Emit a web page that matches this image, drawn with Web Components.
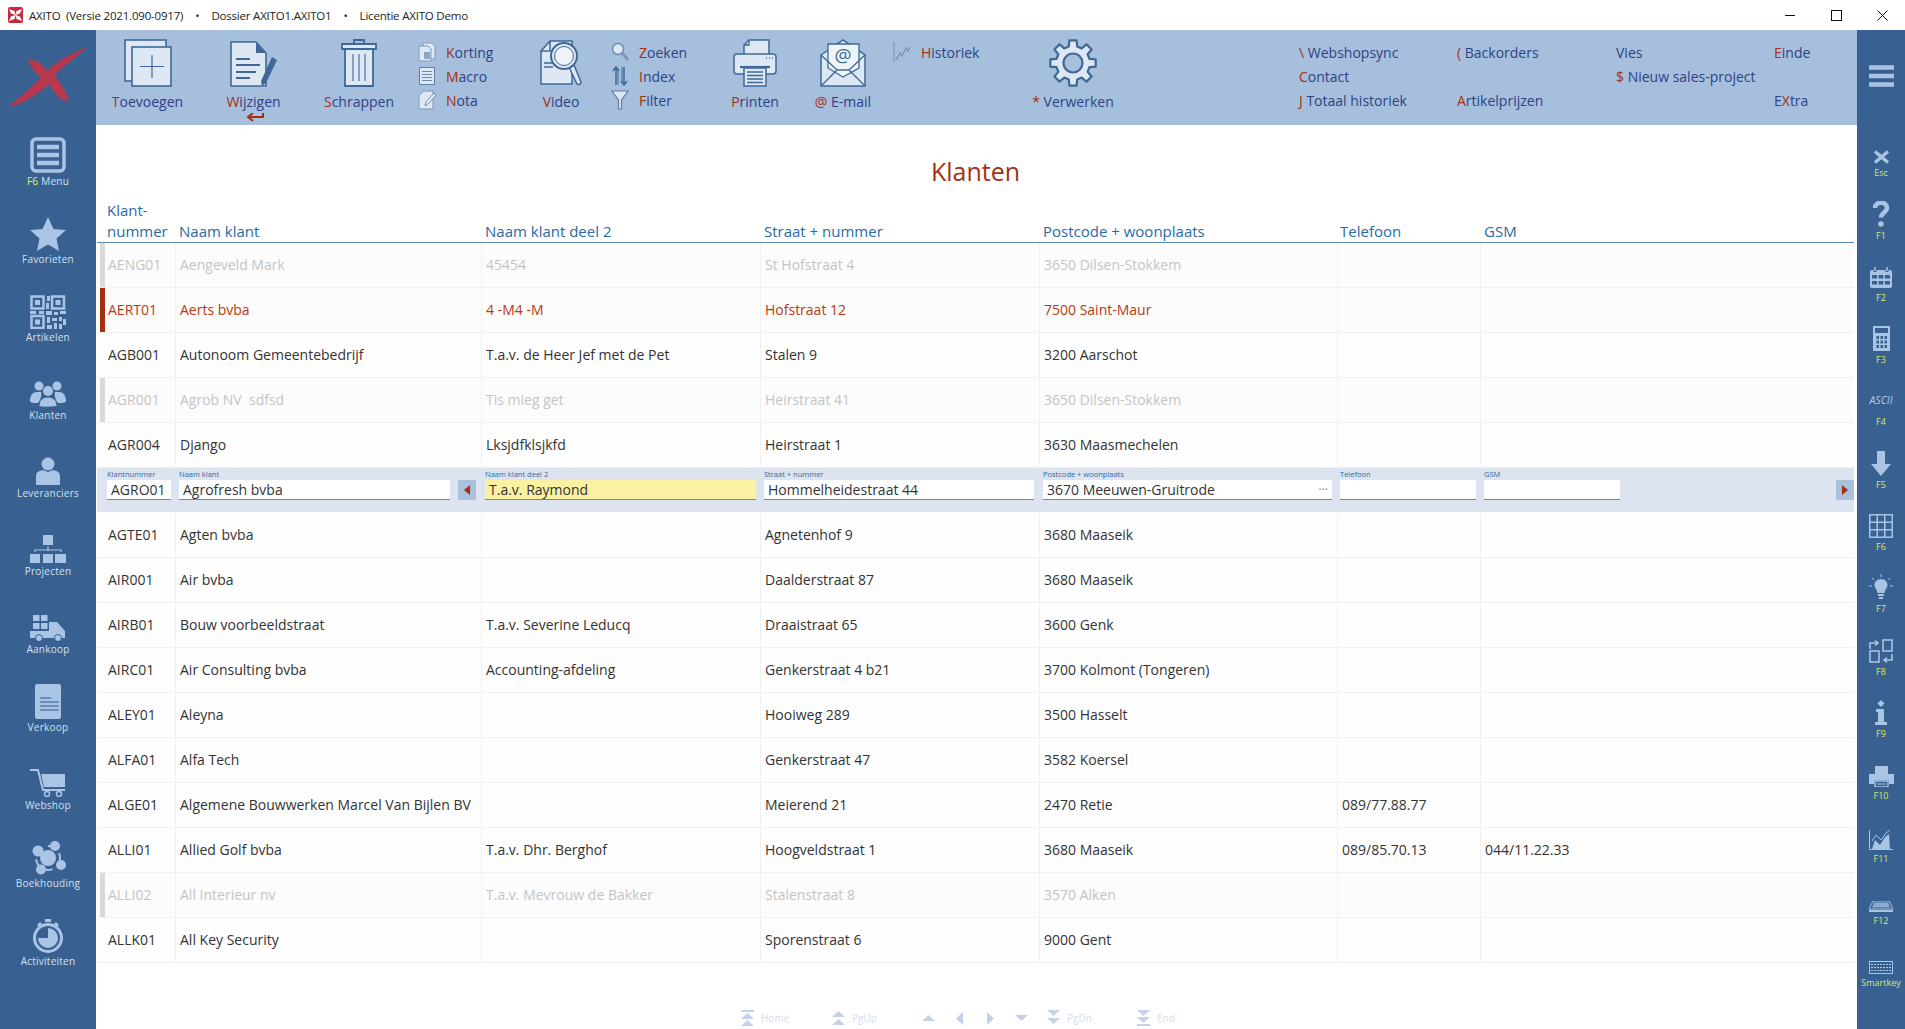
<!DOCTYPE html>
<html lang="nl">
<head>
<meta charset="utf-8">
<title>AXITO</title>
<style>
  html, body { margin: 0; padding: 0; background: #fff; }
  body { font-family: "Open Sans", "Noto Sans", sans-serif; overflow: hidden; }
</style>
</head>
<body>
<axito-app>
  <title-bar slot="title"></title-bar>
  <side-bar slot="left">
    <side-item icon="menu"><em>F6</em> Menu</side-item>
    <side-item icon="star">Favorieten</side-item>
    <side-item icon="qr">Artikelen</side-item>
    <side-item icon="people">Klanten</side-item>
    <side-item icon="person">Leveranciers</side-item>
    <side-item icon="org">Projecten</side-item>
    <side-item icon="truck">Aankoop</side-item>
    <side-item icon="sheet">Verkoop</side-item>
    <side-item icon="cart">Webshop</side-item>
    <side-item icon="balls">Boekhouding</side-item>
    <side-item icon="timer">Activiteiten</side-item>
  </side-bar>
  <tool-bar slot="tools">
    <tool-big icon="add"><b>T</b>oevoegen</tool-big>
    <tool-big icon="edit" arrow><b>W</b>ijzigen</tool-big>
    <tool-big icon="trash"><b>S</b>chrappen</tool-big>
    <tool-col pad="8">
      <tool-small icon="korting"><b>K</b>orting</tool-small>
      <tool-small icon="macro"><b>M</b>acro</tool-small>
      <tool-small icon="nota"><b>N</b>ota</tool-small>
    </tool-col>
    <tool-big icon="video"><b>V</b>ideo</tool-big>
    <tool-col pad="4">
      <tool-small icon="search"><b>Z</b>oeken</tool-small>
      <tool-small icon="index"><b>I</b>ndex</tool-small>
      <tool-small icon="filter"><b>F</b>ilter</tool-small>
    </tool-col>
    <tool-big icon="printer"><b>P</b>rinten</tool-big>
    <tool-big icon="mail"><b>@</b> E-mail</tool-big>
    <tool-col pad="12">
      <tool-small icon="history"><b>H</b>istoriek</tool-small>
    </tool-col>
    <tool-big icon="gear"><b>*</b> Verwerken</tool-big>
    <span></span>
    <tool-col>
      <tool-small><b>\</b> Webshopsync</tool-small>
      <tool-small><b>C</b>ontact</tool-small>
      <tool-small><b>J</b> Totaal historiek</tool-small>
    </tool-col>
    <tool-col>
      <tool-small><b>(</b> Backorders</tool-small>
      <tool-small></tool-small>
      <tool-small><b>A</b>rtikelprijzen</tool-small>
    </tool-col>
    <tool-col>
      <tool-small>Vies</tool-small>
      <tool-small><b>$</b> Nieuw sales-project</tool-small>
      <tool-small></tool-small>
    </tool-col>
    <tool-col>
      <tool-small><b>E</b>inde</tool-small>
      <tool-small></tool-small>
      <tool-small>E<b>X</b>tra</tool-small>
    </tool-col>
  </tool-bar>
  <klant-list slot="main">
    <klant-row state="dim" cells="AENG01|Aengeveld Mark|45454|St Hofstraat 4|3650 Dilsen-Stokkem||"></klant-row>
    <klant-row state="sel" cells="AERT01|Aerts bvba|4 -M4 -M|Hofstraat 12|7500 Saint-Maur||"></klant-row>
    <klant-row cells="AGB001|Autonoom Gemeentebedrijf|T.a.v. de Heer Jef met de Pet|Stalen 9|3200 Aarschot||"></klant-row>
    <klant-row state="dim" cells="AGR001|Agrob NV  sdfsd|Tis mieg get|Heirstraat 41|3650 Dilsen-Stokkem||"></klant-row>
    <klant-row cells="AGR004|Django|Lksjdfklsjkfd|Heirstraat 1|3630 Maasmechelen||"></klant-row>
    <edit-row></edit-row>
    <klant-row cells="AGTE01|Agten bvba||Agnetenhof 9|3680 Maaseik||"></klant-row>
    <klant-row cells="AIR001|Air bvba||Daalderstraat 87|3680 Maaseik||"></klant-row>
    <klant-row cells="AIRB01|Bouw voorbeeldstraat|T.a.v. Severine Leducq|Draaistraat 65|3600 Genk||"></klant-row>
    <klant-row cells="AIRC01|Air Consulting bvba|Accounting-afdeling|Genkerstraat 4 b21|3700 Kolmont (Tongeren)||"></klant-row>
    <klant-row cells="ALEY01|Aleyna||Hooiweg 289|3500 Hasselt||"></klant-row>
    <klant-row cells="ALFA01|Alfa Tech||Genkerstraat 47|3582 Koersel||"></klant-row>
    <klant-row cells="ALGE01|Algemene Bouwwerken Marcel Van Bijlen BV||Meierend 21|2470 Retie|089/77.88.77|"></klant-row>
    <klant-row cells="ALLI01|Allied Golf bvba|T.a.v. Dhr. Berghof|Hoogveldstraat 1|3680 Maaseik|089/85.70.13|044/11.22.33"></klant-row>
    <klant-row state="dim" cells="ALLI02|All Interieur nv|T.a.v. Mevrouw de Bakker|Stalenstraat 8|3570 Alken||"></klant-row>
    <klant-row cells="ALLK01|All Key Security||Sporenstraat 6|9000 Gent||"></klant-row>
  </klant-list>
  <nav-keys slot="nav"></nav-keys>
  <key-bar slot="right">
    <key-item icon="x">Esc</key-item>
    <key-item icon="help">F1</key-item>
    <key-item icon="cal">F2</key-item>
    <key-item icon="calc">F3</key-item>
    <key-item icon="ascii">F4</key-item>
    <key-item icon="down">F5</key-item>
    <key-item icon="grid">F6</key-item>
    <key-item icon="bulb">F7</key-item>
    <key-item icon="swap">F8</key-item>
    <key-item icon="info">F9</key-item>
    <key-item icon="prn">F10</key-item>
    <key-item icon="chart">F11</key-item>
    <key-item icon="kbflat">F12</key-item>
    <key-item icon="kb">Smartkey</key-item>
  </key-bar>
</axito-app>

<script>
// toolbar icons use these two colours
const S = '#3f6896', F = '#dde8f4', L = '#a9c4e4';
const svg = (w, h, body, extra = '') => `<svg width="${w}" height="${h}" viewBox="0 0 ${w} ${h}" ${extra}>${body}</svg>`;

function gearPath(cx, cy, ro, ri, n) {
  let d = '';
  for (let i = 0; i < n; i++) {
    const a = i * 2 * Math.PI / n - Math.PI / 2, t = 2 * Math.PI / n;
    const pts = [[ri, a - t * .32], [ro, a - t * .2], [ro, a + t * .2], [ri, a + t * .32]];
    pts.forEach(([r, b], j) => {
      d += (i === 0 && j === 0 ? 'M' : 'L') + (cx + r * Math.cos(b)).toFixed(1) + ' ' + (cy + r * Math.sin(b)).toFixed(1);
    });
  }
  return d + 'Z';
}

const TOOL_ICONS = {
  add: svg(48, 48, `<g fill="${F}" stroke="${S}" stroke-width="1.6"><rect x="1" y="1" width="41" height="41"/><rect x="8" y="8" width="39" height="39"/></g><path d="M28 16v23M16 27.500h24" stroke="${S}" stroke-width="1.2"/>`),
  edit: svg(48, 48, `<path d="M1 3h25l10 11v33H1z" fill="${F}" stroke="${S}" stroke-width="1.6"/><path d="M26 3v11h10z" fill="${S}"/><path d="M6 20h14M6 26h24M6 33h20M6 39h14" stroke="${S}" stroke-width="2"/><path d="M42 18l5 3-11 23-4 3-1-5z" fill="${S}"/>`),
  trash: svg(36, 48, `<path d="M1 5h34v5H1z" fill="${F}" stroke="${S}" stroke-width="1.8"/><path d="M13 5V1h10v4" fill="none" stroke="${S}" stroke-width="1.8"/><path d="M4 10h28v37H4z" fill="${F}" stroke="${S}" stroke-width="1.8"/><path d="M12 15v27M18 15v27M24 15v27" stroke="${S}" stroke-width="1.1"/>`),
  video: svg(42, 48, `<path d="M1 12 10 2h22v43H1z" fill="${F}" stroke="${S}" stroke-width="1.5"/><path d="M1 12h9V2" fill="none" stroke="${S}" stroke-width="1.5"/><path d="M4 24h9M4 28h9" stroke="${S}" stroke-width="1.3"/><path d="M29 28l8 17a2.500 2.500 0 0 0 4-2l-7-17" fill="${F}" stroke="${S}" stroke-width="1.5"/><circle cx="24" cy="17" r="13" fill="${F}" stroke="${S}" stroke-width="2"/><circle cx="24" cy="17" r="9.500" fill="#eef4fa" stroke="${S}" stroke-width="1"/>`),
  printer: svg(44, 48, `<path d="M11 24V6l5-5h20v23z" fill="${F}" stroke="${S}" stroke-width="1.5"/><path d="M11 6h5V1" fill="none" stroke="${S}" stroke-width="1.3"/><rect x="1" y="15" width="42" height="20" rx="3" fill="${F}" stroke="${S}" stroke-width="1.5"/><path d="M7 28h30" stroke="${S}" stroke-width="2.200"/><path d="M33 19h1M36 19h1M39 19h1" stroke="${S}" stroke-width="1.500"/><path d="M11 29h22v18H11z" fill="${F}" stroke="${S}" stroke-width="1.5"/><path d="M14 33h16M14 36.500h16M14 40h16M14 43.500h16" stroke="${S}" stroke-width="1.500"/>`),
  mail: svg(46, 48, `<path d="M1 16 23 1l22 15v31H1z" fill="${F}" stroke="${S}" stroke-width="1.500"/><path d="M8 29V5h31v24L23 38z" fill="#eef4fa" stroke="${S}" stroke-width="1.300"/><path d="M1 47 17 31h12l16 16M1 16l16 15M45 16 29 31" fill="none" stroke="${S}" stroke-width="1.300"/><text x="23" y="23" font-size="19" text-anchor="middle" fill="${S}" font-family="Open Sans">@</text>`),
  gear: svg(48, 48, `<path fill-rule="evenodd" d="${gearPath(24, 24, 23, 17, 8)}" fill="${F}" stroke="${S}" stroke-width="2.200" stroke-linejoin="round"/><circle cx="24" cy="24" r="9.500" fill="#a5bfdc" stroke="${S}" stroke-width="2.200"/>`),
  korting: svg(18, 20, `<path d="M5 1h9l3 3v13H5z" fill="${F}" stroke="#7f99b8"/><path d="M1 4h9l3 3v12H1z" fill="${F}" stroke="#7f99b8"/><rect x="6" y="10" width="6" height="7" fill="#8ea6c2"/>`),
  macro: svg(18, 20, `<rect x="1.500" y="1.500" width="15" height="17" fill="${F}" stroke="#5f7fa4"/><path d="M4 5.500h10M4 8.500h10M4 11.500h10M4 14.500h10" stroke="#6f8cb0"/>`),
  nota: svg(18, 20, `<path d="M1 5l5-4h9v18H1z" fill="${F}" stroke="#7f99b8"/><path d="M7 16l1-4 8-9 2 2-8 9z" fill="#e9f0f8" stroke="#6f8cb0"/>`),
  search: svg(18, 20, `<circle cx="7" cy="7" r="5.500" fill="${F}" stroke="#6f8cb0" stroke-width="1.500"/><path d="M11 11l6 7" stroke="#8297b2" stroke-width="3"/>`),
  index: svg(18, 20, `<path d="M5 19V2M2 5l3-4 3 4M13 1v17M10 15l3 4 3-4" fill="none" stroke="#3f6896" stroke-width="1.500"/><path d="M7 19V3M11 1v15" stroke="#3f6896"/>`),
  filter: svg(18, 20, `<path d="M1 1h16l-6.500 9v9h-3v-9z" fill="${F}" stroke="#5f7fa4" stroke-width="1.200"/>`),
  history: svg(18, 20, `<path d="M1 0v20" stroke="#7a90aa"/><path d="M3 18l4-7 2 3 4-8 2 3 2-4" fill="none" stroke="#7a90aa" stroke-width="1.200"/>`)
};

const SIDE_ICONS = {
  menu: svg(36, 36, `<rect x="2" y="2" width="32" height="32" rx="4" fill="none" stroke="${L}" stroke-width="3.500"/><path d="M7 10h22M7 18h22M7 26h22" stroke="${L}" stroke-width="4.500"/>`),
  star: svg(36, 34, `<path d="M18 0l5.500 12L36 13l-9.500 8.500L29 34l-11-6.500L7 34l2.500-12.500L0 13l12.500-1z" fill="${L}"/>`),
  qr: svg(36, 34, `<g fill="none" stroke="${L}" stroke-width="2.500"><rect x="1.500" y="1.500" width="12" height="12"/><rect x="22" y="1.500" width="12" height="12"/><rect x="1.500" y="21" width="12" height="12"/></g><g fill="${L}"><rect x="5" y="5" width="5" height="5"/><rect x="25.500" y="5" width="5" height="5"/><rect x="5" y="24.500" width="5" height="5"/><rect x="17" y="1" width="3" height="5"/><rect x="16" y="8" width="3" height="6"/><rect x="0" y="16" width="6" height="3"/><rect x="9" y="16" width="5" height="3"/><rect x="16" y="16" width="6" height="4"/><rect x="24" y="17" width="4" height="3"/><rect x="30" y="16" width="6" height="3"/><rect x="17" y="22" width="3" height="6"/><rect x="22" y="23" width="5" height="3"/><rect x="29" y="22" width="3" height="4"/><rect x="33" y="24" width="3" height="6"/><rect x="17" y="30" width="5" height="4"/><rect x="24" y="28" width="3" height="6"/><rect x="29" y="29" width="3" height="5"/></g>`),
  people: svg(36, 26, `<g fill="${L}"><circle cx="9" cy="5" r="4.500"/><circle cx="27" cy="5" r="4.500"/><path d="M0 20c0-6 3-9 7-9l4 0c1 4-1 9-3 11-4 0-8 0-8-2zM36 20c0-6-3-9-7-9l-4 0c-1 4 1 9 3 11 4 0 8 0 8-2z"/><circle cx="18" cy="10" r="5"/></g><path d="M9 25c0-6 4-9 9-9s9 3 9 9c0 1-18 2-18 0z" fill="${L}" stroke="#386090"/>`),
  person: svg(24, 28, `<circle cx="12" cy="7" r="6.500" fill="${L}"/><path d="M0 28v-9c0-4 3-5 7-6l5 2 5-2c4 1 7 2 7 6v9z" fill="${L}"/>`),
  org: svg(36, 28, `<g fill="${L}"><rect x="13" y="0" width="10" height="10"/><rect x="0" y="19" width="10" height="9"/><rect x="13" y="19" width="10" height="9"/><rect x="25" y="19" width="11" height="9"/></g><path d="M18 11v5M5 17v-2h26v2" fill="none" stroke="${L}" stroke-width="1.200"/>`),
  truck: svg(36, 26, `<g fill="${L}"><rect x="3" y="0" width="6.500" height="6"/><rect x="11" y="0" width="6.500" height="6"/><rect x="3" y="8" width="6.500" height="6"/><rect x="11" y="8" width="6.500" height="6"/><path d="M0 16h19V7h8l8 9v7H0z"/><circle cx="9" cy="23" r="3.500" stroke="#386090"/><circle cx="28" cy="23" r="3.500" stroke="#386090"/></g>`),
  sheet: svg(26, 35, `<rect width="26" height="35" rx="2" fill="${L}"/><path d="M4 14h13M4 18h22M4 22h22M4 26h22" stroke="#5a7da8" stroke-width="1.300" transform="translate(0 0) scale(.85 1) translate(2 0)"/>`),
  cart: svg(36, 28, `<path d="M0 1h8l5 20h22" fill="none" stroke="${L}" stroke-width="2"/><path d="M11 5h24v13H14z" fill="${L}"/><circle cx="17" cy="25" r="2.500" fill="none" stroke="${L}" stroke-width="1.500"/><circle cx="29" cy="25" r="2.500" fill="none" stroke="${L}" stroke-width="1.500"/>`),
  balls: svg(36, 34, `<circle cx="18" cy="17" r="8" fill="${L}"/><circle cx="8" cy="10" r="5.500" fill="${L}"/><circle cx="25" cy="5" r="5" fill="${L}"/><circle cx="31" cy="24" r="5" fill="${L}"/><circle cx="11" cy="28.500" r="5" fill="${L}"/><circle cx="18" cy="17" r="12" fill="none" stroke="${L}" stroke-width="2" stroke-dasharray="8 6"/>`),
  timer: svg(32, 35, `<path d="M13 1h6v3h-6zM5 7l3-3 2 2-3 3zM27 7l-3-3-2 2 3 3z" fill="${L}"/><circle cx="16" cy="20" r="13.500" fill="none" stroke="${L}" stroke-width="3"/><path d="M16 10v10H6a10 10 0 1 0 10-10z" fill="${L}"/>`)
};

const KEY_ICONS = {
  x: svg(17, 14, `<path d="M2 1.500l13 11M15 1.500l-13 11" stroke="${L}" stroke-width="3.400"/>`),
  help: svg(18, 26, `<path d="M3 7c0-7 12-7 12 0 0 4-6 5-6 9.500" fill="none" stroke="${L}" stroke-width="4.500"/><circle cx="9" cy="23" r="2.800" fill="${L}"/>`),
  cal: svg(24, 22, `<rect x="1" y="3" width="22" height="18" rx="2" fill="${L}"/><path d="M6 0v5M18 0v5" stroke="#386090" stroke-width="3"/><path d="M6 0v4M18 0v4" stroke="${L}" stroke-width="1.500"/><g fill="#386090"><rect x="3" y="8" width="5" height="3.500"/><rect x="9.500" y="8" width="5" height="3.500"/><rect x="16" y="8" width="5" height="3.500"/><rect x="3" y="14" width="5" height="3.500"/><rect x="9.500" y="14" width="5" height="3.500"/><rect x="16" y="14" width="5" height="3.500"/></g>`),
  calc: svg(17, 25, `<rect width="17" height="25" fill="${L}"/><rect x="2" y="2" width="13" height="5" fill="#386090"/><g fill="#386090"><rect x="3.500" y="10" width="2.500" height="3"/><rect x="7.500" y="10" width="2.500" height="3"/><rect x="11.500" y="10" width="2.500" height="3"/><rect x="3.500" y="14.500" width="2.500" height="3"/><rect x="7.500" y="14.500" width="2.500" height="3"/><rect x="11.500" y="14.500" width="2.500" height="3"/><rect x="3.500" y="19" width="2.500" height="3"/><rect x="7.500" y="19" width="2.500" height="3"/><rect x="11.500" y="19" width="2.500" height="3"/></g>`),
  ascii: `<span class="ascii">ASCII</span>`,
  down: svg(20, 25, `<path d="M6 0h8v13h6L10 25 0 13h6z" fill="${L}"/>`),
  grid: svg(24, 24, `<path d="M.75.750h22.500v22.500H.75zM8.250.750v22.500M15.750.750v22.500M.75 8.250h22.500M.75 15.750h22.500" fill="none" stroke="${L}" stroke-width="1.500"/>`),
  bulb: svg(24, 26, `<path d="M12 5c-4 0-6.500 3-6.500 6 0 3 2.500 4 3 8h7c.5-4 3-5 3-8 0-3-2.500-6-6.500-6z" fill="${L}"/><rect x="9" y="20" width="6" height="2" fill="${L}"/><rect x="10" y="23" width="4" height="2" fill="${L}"/><path d="M12 0v3M3 4l2 2M21 4l-2 2M0 12h3M21 12h3" stroke="${L}"/>`),
  swap: svg(24, 24, `<g fill="none" stroke="${L}" stroke-width="1.600"><rect x="14" y="1" width="9" height="11"/><rect x="1" y="12" width="9" height="11"/></g><path d="M1 10V4h7M6 1.500 9 4 6 6.500M23 15v6h-7M18 18.500 15 21l3 2.500" fill="none" stroke="${L}" stroke-width="1.600"/>`),
  info: svg(12, 25, `<path d="M6 0l3.500 3.500L6 7 2.500 3.500z" fill="${L}"/><path d="M1 9h8v13h3v3H0v-3h3V12H1z" fill="${L}"/>`),
  prn: svg(25, 21, `<path d="M6 8V0h13v8z" fill="${L}"/><path d="M0 8h25v10H20v-4H5v4H0z" fill="${L}"/><path d="M6 15h13v6H6z" fill="none" stroke="${L}" stroke-width="1.400"/><path d="M8 18h9" stroke="${L}"/>`),
  chart: svg(24, 20, `<path d="M.5 0v19.500H24" fill="none" stroke="${L}"/><path d="M3 19l3-9 5 5 5-8 4-3 1 15z" fill="${L}"/><path d="M3 11l4-6 5 5 5-7 4-3" fill="none" stroke="${L}"/>`),
  kbflat: svg(24, 11, `<path d="M4 0h16l4 8H0z" fill="none" stroke="${L}"/><path d="M5 1.500h14l2 5H3z" fill="${L}" opacity=".75"/><path d="M0 9h24v2H0z" fill="${L}"/>`),
  kb: svg(24, 13, `<rect x=".5" y=".5" width="23" height="12" fill="none" stroke="${L}"/><path d="M2 3.500h20M2 6.500h20M2 9.500h20" stroke="${L}" stroke-dasharray="2 1"/>`)
};

class AxitoApp extends HTMLElement {
  constructor() {
    super();
    this.attachShadow({ mode: 'open' }).innerHTML = `
      <style>
        :host { display: flex; flex-direction: column; width: 1905px; height: 1029px; overflow: hidden; color: #333; }
        .body { flex: 1; display: flex; min-height: 0; }
        .center { flex: 1; display: flex; flex-direction: column; min-width: 0; }
        .fill { flex: 1; }
      </style>
      <slot name="title"></slot>
      <div class="body">
        <slot name="left"></slot>
        <div class="center">
          <slot name="tools"></slot>
          <slot name="main"></slot>
          <div class="fill"></div>
          <slot name="nav"></slot>
        </div>
        <slot name="right"></slot>
      </div>`;
  }
}

class TitleBar extends HTMLElement {
  constructor() {
    super();
    this.attachShadow({ mode: 'open' }).innerHTML = `
      <style>
        :host { display: flex; align-items: center; height: 30px; font-size: 11.500px; letter-spacing: -.2px; color: #222; white-space: pre; }
        svg.logo { margin: 0 6px 0 8px; }
        .dot { margin: 0 12px; }
        .win { margin-left: auto; display: flex; }
        .win div { width: 46px; height: 30px; display: flex; align-items: center; justify-content: center; }
      </style>
      <svg class="logo" width="15" height="16" viewBox="0 0 15 16"><rect width="15" height="16" rx="2" fill="#c8283c"/><path d="M1 2l5.500 2L7.500 8 3 6.500zM14 2 8.500 4 7.500 8 12 6.500zM1 14l5.500-2 1-4L3 9.500zM14 14l-5.500-2-1-4L12 9.500z" fill="#fff"/></svg>
      <span>AXITO  (Versie 2021.090-0917)</span><span class="dot">•</span><span>Dossier AXITO1.AXITO1</span><span class="dot">•</span><span>Licentie AXITO Demo</span>
      <div class="win">
        <div><svg width="11" height="11"><path d="M0 5.500h10" stroke="#111"/></svg></div>
        <div><svg width="11" height="11"><rect x=".5" y=".5" width="10" height="10" fill="none" stroke="#111"/></svg></div>
        <div><svg width="11" height="11"><path d="M.5.500l10 10M10.500.500l-10 10" stroke="#111"/></svg></div>
      </div>`;
  }
}

class SideBar extends HTMLElement {
  constructor() {
    super();
    this.attachShadow({ mode: 'open' }).innerHTML = `
      <style>
        :host { display: block; width: 96px; background: #386090; flex: none; }
        .logo { height: 81px; display: flex; justify-content: center; align-items: flex-end; padding-bottom: 4px; box-sizing: border-box; }
      </style>
      <div class="logo">
        <svg width="78" height="60" viewBox="0 0 78 60"><path d="M78 0C58 8 46 16 38 24 34 18 30 12 19 13 22 20 26 26 32 31 20 42 8 52 0 60 16 56 30 46 40 37 46 46 50 54 60 54 58 46 52 36 45 28 58 16 70 8 78 0z" fill="#b8384e"/></svg>
      </div>
      <slot></slot>`;
  }
}

class SideItem extends HTMLElement {
  constructor() {
    super();
    this.attachShadow({ mode: 'open' }).innerHTML = `
      <style>
        :host { display: flex; flex-direction: column; align-items: center; justify-content: flex-end; height: 78px; box-sizing: border-box; padding-bottom: 2px; }
        .i { display: flex; height: 36px; align-items: flex-end; margin-bottom: 2px; }
        .t { font-size: 10px; line-height: 12px; color: #d4e0ee; letter-spacing: .25px; white-space: nowrap; }
        ::slotted(em) { font-style: normal; color: #e6ec6a; }
      </style>
      <div class="i">${SIDE_ICONS[this.getAttribute('icon')] || ''}</div>
      <div class="t"><slot></slot></div>`;
  }
}

class ToolBar extends HTMLElement {
  constructor() {
    super();
    this.attachShadow({ mode: 'open' }).innerHTML = `
      <style>
        :host { display: grid; height: 95px; background: #a5bfdc; flex: none; font-size: 14px; color: #2f4286;
          grid-template-columns: 103px 109px 102px 105px 92px 98px 100px 76px 132px 120px 166px 158px 159px 158px 1fr; }
      </style>
      <slot></slot>`;
  }
}

class ToolBig extends HTMLElement {
  constructor() {
    super();
    const arrow = this.hasAttribute('arrow')
      ? `<svg class="arrow" width="18" height="10" viewBox="0 0 18 10"><path d="M17 0v4H3M7 0 2 4l5 4" fill="none" stroke="#a5300f" stroke-width="2"/></svg>` : '';
    this.attachShadow({ mode: 'open' }).innerHTML = `
      <style>
        :host { display: flex; flex-direction: column; align-items: center; padding-top: 9px; }
        .i { height: 48px; display: flex; }
        .t { line-height: 24px; margin-top: 3px; white-space: nowrap; }
        ::slotted(b) { font-weight: normal; color: #a5300f; }
        .arrow { margin-top: -1px; margin-left: 3px; }
      </style>
      <div class="i">${TOOL_ICONS[this.getAttribute('icon')] || ''}</div>
      <div class="t"><slot></slot></div>${arrow}`;
  }
}

class ToolCol extends HTMLElement {
  constructor() {
    super();
    this.attachShadow({ mode: 'open' }).innerHTML = `
      <style>
        :host { display: flex; flex-direction: column; padding: 10px 0 0 ${this.getAttribute('pad') || 0}px; }
      </style>
      <slot></slot>`;
  }
}

class ToolSmall extends HTMLElement {
  constructor() {
    super();
    const ic = TOOL_ICONS[this.getAttribute('icon')];
    this.attachShadow({ mode: 'open' }).innerHTML = `
      <style>
        :host { display: flex; align-items: center; height: 24px; white-space: nowrap; }
        .i { width: 18px; height: 20px; margin-right: 10px; display: flex; }
        ::slotted(b) { font-weight: normal; color: #a5300f; }
      </style>
      ${ic ? `<div class="i">${ic}</div>` : ''}<span><slot></slot></span>`;
  }
}

const COLS = '78px 306px 279px 279px 298px 143px 1fr';

class KlantList extends HTMLElement {
  constructor() {
    super();
    this.attachShadow({ mode: 'open' }).innerHTML = `
      <style>
        :host { display: block; margin-left: 1px; margin-right: 3px; }
        h1 { margin: 0; padding: 28px 0 11px; font-size: 25px; line-height: 36px; font-weight: 400; color: #a5300f; text-align: center; }
        .head { display: grid; grid-template-columns: ${COLS}; border-bottom: 1.500px solid #5f8db0; height: 43px; padding-bottom: .5px; box-sizing: border-box; align-content: end; align-items: end; font-size: 15px; line-height: 21px; color: #2a6aa5; }
        .head div { padding-left: 4px; }
        .head div:first-child { padding-left: 10px; }
        .head div:nth-child(6) { padding-left: 3px; }
      </style>
      <h1>Klanten</h1>
      <div class="head"><div>Klant-<br>nummer</div><div>Naam klant</div><div>Naam klant deel 2</div><div>Straat + nummer</div><div>Postcode + woonplaats</div><div>Telefoon</div><div>GSM</div></div>
      <slot></slot>`;
  }
}

class KlantRow extends HTMLElement {
  constructor() {
    super();
    const cells = (this.getAttribute('cells') || '').split('|');
    this.attachShadow({ mode: 'open' }).innerHTML = `
      <style>
        :host { display: grid; grid-template-columns: ${COLS}; height: 45px; box-sizing: border-box; border-bottom: 1px solid #f0f0f0; font-size: 14px; color: #333; background: #fefefe; }
        :host([state=dim]) { color: #c4c4c4; background: #fcfcfc; }
        :host([state=sel]) { color: #b8390e; background: #fcfcfc; }
        div { display: flex; align-items: center; padding: 0 0 2px 4px; border-left: 1px solid #f0f0f0; white-space: pre; min-width: 0; }
        div:first-of-type { margin-left: 3px; border-left: 5px solid transparent; padding-left: 3px; }
        :host([state=dim]) div:first-of-type { border-left-color: #d9d9d9; }
        :host([state=sel]) div:first-of-type { border-left-color: #a5300f; }
      </style>
      ${cells.map(c => `<div>${c}</div>`).join('')}`;
  }
}

class EditField extends HTMLElement {
  constructor() {
    super();
    const w = this.getAttribute('w'), v = this.getAttribute('value') || '';
    this.attachShadow({ mode: 'open' }).innerHTML = `
      <style>
        :host { display: block; width: ${w}px; flex: none; }
        label { display: block; height: 12px; font-size: 7.500px; line-height: 12px; color: #2a6aa5; white-space: nowrap; }
        .v { height: 20px; box-sizing: border-box; background: #fff; border-bottom: 1px solid #5f8db0; font-size: 14px; line-height: 19px; color: #333; padding-left: 4px; display: flex; justify-content: space-between; white-space: nowrap; }
        :host([active]) .v { background: #faf1a2; }
        .more { color: #888; font-size: 12px; padding-right: 4px; }
      </style>
      <label>${this.getAttribute('label')}</label>
      <div class="v"><span>${v}</span>${this.hasAttribute('more') ? '<span class="more">···</span>' : ''}</div>`;
  }
}

class EditRow extends HTMLElement {
  constructor() {
    super();
    const btn = d => `<div class="btn"><svg width="6" height="10" viewBox="0 0 6 10"><path d="${d}" fill="#a5300f"/></svg></div>`;
    this.attachShadow({ mode: 'open' }).innerHTML = `
      <style>
        :host { display: flex; height: 44px; margin-bottom: 1px; padding-left: 10px; box-sizing: border-box; background: #dde4f0; }
        edit-field { margin-right: 8px; }
        .btn { width: 18px; height: 20px; margin-top: 12px; background: #a9c1dc; display: flex; align-items: center; justify-content: center; flex: none; }
        .gap { margin-left: auto; }
      </style>
      <edit-field w="64" label="Klantnummer" value="AGRO01"></edit-field>
      <edit-field w="271" label="Naam klant" value="Agrofresh bvba"></edit-field>
      ${btn('M6 0v10L0 5z')}
      <edit-field w="271" label="Naam klant deel 2" value="T.a.v. Raymond" active style="margin-left:9px"></edit-field>
      <edit-field w="270" label="Straat + nummer" value="Hommelheidestraat 44" style="margin-right:9px"></edit-field>
      <edit-field w="289" label="Postcode + woonplaats" value="3670 Meeuwen-Gruitrode" more></edit-field>
      <edit-field w="136" label="Telefoon"></edit-field>
      <edit-field w="136" label="GSM"></edit-field>
      <div class="gap"></div>
      ${btn('M0 0v10L6 5z')}`;
  }
}

class NavKeys extends HTMLElement {
  constructor() {
    super();
    const c = '#c5d0ec';
    const up = `<path d="M6.500 0 13 6H0z" fill="${c}"/>`, dn = `<path d="M6.500 6 13 0H0z" fill="${c}"/>`;
    const home = `<rect width="13" height="2" fill="${c}"/><g transform="translate(0 3)">${up}</g><g transform="translate(0 10)">${up}</g>`;
    const pgup = `<g transform="translate(0 1)">${up}</g><g transform="translate(0 9)">${up}</g>`;
    const pgdn = `<g>${dn}</g><g transform="translate(0 8)">${dn}</g>`;
    const end = `<g>${dn}</g><g transform="translate(0 7)">${dn}</g><rect y="14" width="13" height="2" fill="${c}"/>`;
    this.attachShadow({ mode: 'open' }).innerHTML = `
      <style>
        :host { display: flex; align-items: center; height: 16px; margin-bottom: 3px; padding-left: 645px; font-size: 10px; color: #d5ddf0; flex: none; }
        span { margin-left: 7px; }
        svg { flex: none; display: block; }
      </style>
      <svg width="13" height="16">${home}</svg><span style="width:27px">Home</span>
      <svg width="13" height="16" style="margin-left:44px">${pgup}</svg><span style="width:25px">PgUp</span>
      <svg width="13" height="6" style="margin-left:45px"><g>${up}</g></svg>
      <svg width="7" height="13" style="margin-left:21px"><path d="M7 0v13L0 6.500z" fill="${c}"/></svg>
      <svg width="7" height="13" style="margin-left:24px"><path d="M0 0v13l7-6.500z" fill="${c}"/></svg>
      <svg width="13" height="6" style="margin-left:21px"><g>${dn}</g></svg>
      <svg width="13" height="16" style="margin-left:19px">${pgdn}</svg><span style="width:25px">PgDn</span>
      <svg width="13" height="16" style="margin-left:45px">${end}</svg><span>End</span>`;
  }
}

class KeyBar extends HTMLElement {
  constructor() {
    super();
    this.attachShadow({ mode: 'open' }).innerHTML = `
      <style>
        :host { display: block; width: 48px; background: #386090; flex: none; }
        .top { height: 86px; display: flex; justify-content: center; padding-top: 35px; box-sizing: border-box; }
      </style>
      <div class="top"><svg width="25" height="22" viewBox="0 0 25 22"><path d="M0 2.500h25M0 11h25M0 19.500h25" stroke="${L}" stroke-width="4.500"/></svg></div>
      <slot></slot>`;
  }
}

class KeyItem extends HTMLElement {
  constructor() {
    super();
    this.attachShadow({ mode: 'open' }).innerHTML = `
      <style>
        :host { display: flex; flex-direction: column; align-items: center; justify-content: flex-end; height: 62.300px; }
        .i { display: flex; margin-bottom: 4px; }
        .t { font-size: 9px; line-height: 10px; color: #d8e86a; white-space: nowrap; }
        .ascii { font-size: 10.500px; font-style: italic; color: #b4cbe6; margin-bottom: 6px; }
      </style>
      <div class="i">${KEY_ICONS[this.getAttribute('icon')] || ''}</div>
      <div class="t"><slot></slot></div>`;
  }
}

customElements.define('axito-app', AxitoApp);
customElements.define('title-bar', TitleBar);
customElements.define('side-bar', SideBar);
customElements.define('side-item', SideItem);
customElements.define('tool-bar', ToolBar);
customElements.define('tool-big', ToolBig);
customElements.define('tool-col', ToolCol);
customElements.define('tool-small', ToolSmall);
customElements.define('klant-list', KlantList);
customElements.define('klant-row', KlantRow);
customElements.define('edit-field', EditField);
customElements.define('edit-row', EditRow);
customElements.define('nav-keys', NavKeys);
customElements.define('key-bar', KeyBar);
customElements.define('key-item', KeyItem);
</script>
</body>
</html>
